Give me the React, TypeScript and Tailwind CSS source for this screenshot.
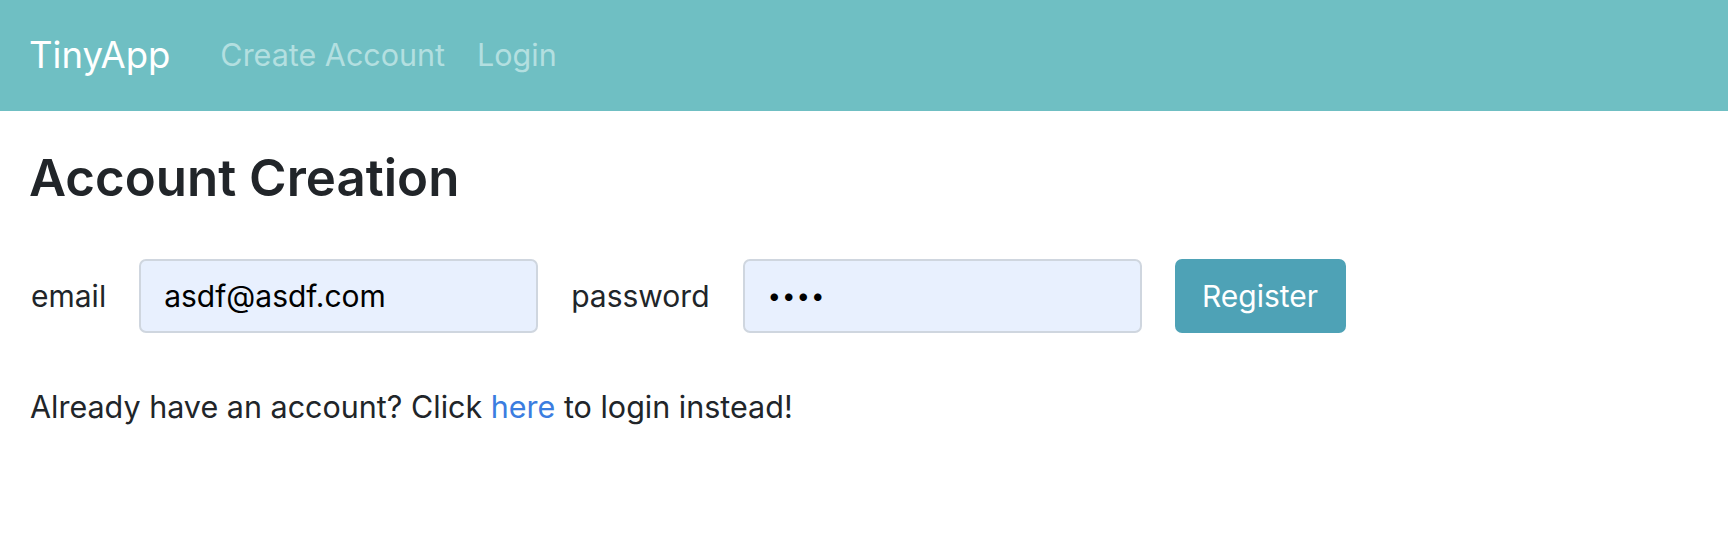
export default function App() {
  const font = { fontFamily: 'Inter, "Noto Sans", sans-serif' };
  return (
    <div className="min-h-[546px] bg-white text-[#212529]" style={font}>
      <nav className="flex h-[111px] items-center bg-[#6fbfc3] px-[29px]">
        <span className="mr-[50px] text-[36.5px] leading-none text-white">TinyApp</span>
        <div className="flex items-center gap-[32px] text-[30.5px] leading-none text-[#b3dfe0]">
          <a>Create Account</a>
          <a>Login</a>
        </div>
      </nav>
      <main className="px-[29px]">
        <h1 className="mt-[36px] text-[51px] font-semibold leading-[1.2]">Account Creation</h1>
        <form className="mt-[51px] flex items-center gap-[33px]">
          <label className="ml-[2px] text-[30px]">email</label>
          <div className="flex h-[74px] w-[399px] items-center rounded-[7px] border-2 border-[#cfd6df] bg-[#e8f0fe] px-[23px] text-[30px] text-black">
            asdf@asdf.com
          </div>
          <label className="text-[30px]">password</label>
          <div className="flex h-[74px] w-[399px] items-center rounded-[7px] border-2 border-[#cfd6df] bg-[#e8f0fe] px-[23px] text-[24px] tracking-[1px] text-black">
            ••••
          </div>
          <button type="button" className="h-[74px] w-[171px] rounded-[7px] bg-[#4ea2b6] text-[30px] text-white">
            Register
          </button>
        </form>
        <p className="mt-[51px] ml-[1px] text-[30.5px]">
          Already have an account? Click <a className="text-[#3b7de0]">here</a> to login instead!
        </p>
      </main>
    </div>
  );
}
